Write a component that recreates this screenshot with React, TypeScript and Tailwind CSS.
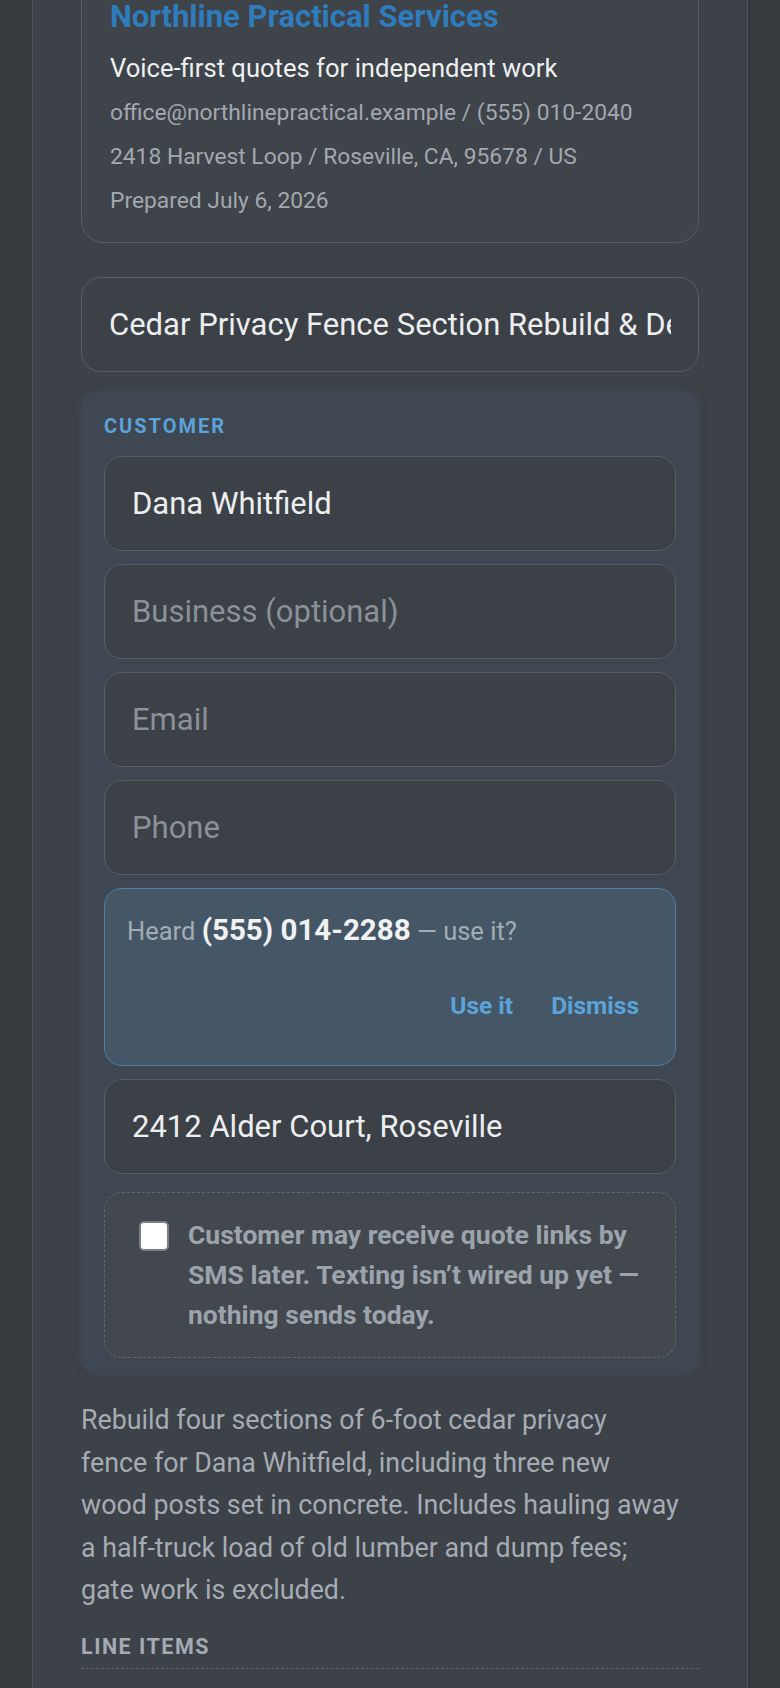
import { useState } from 'react';

const customerFields = [
  { key: 'name', value: 'Dana Whitfield', placeholder: 'Name' },
  { key: 'business', value: '', placeholder: 'Business (optional)' },
  { key: 'email', value: '', placeholder: 'Email' },
  { key: 'phone', value: '', placeholder: 'Phone' },
];

function Field({ value, placeholder }: { value: string; placeholder: string }) {
  return (
    <input
      readOnly
      defaultValue={value}
      placeholder={placeholder}
      className="block h-[95px] w-full rounded-[18px] border border-[#595e66] bg-[#3c4047] px-[27px] text-[31px] text-[#eceef0] outline-none placeholder:text-[#8b9198]"
    />
  );
}

export default function App() {
  const [heardOpen, setHeardOpen] = useState(true);
  const [smsOk, setSmsOk] = useState(false);

  return (
    <div className="min-h-screen overflow-hidden bg-[#363a3f] font-['Roboto',sans-serif]">
      <div className="mx-[32px] min-h-screen border-x border-[#50555c] bg-[#3d4148] px-[48px] pb-[40px]">
        {/* business header card, scrolled partly out of view */}
        <div className="mt-[-32px] rounded-[22px] border border-[#585d64] bg-[#3f434a] px-[28px] pb-[19px] pt-[28px]">
          <h1 className="text-[31px] font-bold leading-[40px] text-[#2f7cbd]">Northline Practical Services</h1>
          <p className="mt-[11px] text-[25.6px] leading-[40px] text-[#eef0f2]">Voice-first quotes for independent work</p>
          <p className="mt-[3px] text-[22.8px] leading-[44px] text-[#a2a8af]">office@northlinepractical.example / (555) 010-2040</p>
          <p className="text-[22.8px] leading-[44px] text-[#a2a8af]">2418 Harvest Loop / Roseville, CA, 95678 / US</p>
          <p className="text-[22.8px] leading-[44px] text-[#a2a8af]">Prepared July 6, 2026</p>
        </div>

        {/* quote title */}
        <input
          readOnly
          defaultValue="Cedar Privacy Fence Section Rebuild & Debris Haul-Away"
          className="mt-[34px] block h-[95px] w-full rounded-[20px] border border-[#595e66] bg-[#3c4047] px-[27px] text-[31px] text-[#eceef0] outline-none"
        />

        {/* customer block */}
        <section className="mt-[19px] rounded-[18px] bg-[#3f4852] px-[23px] pb-[17px] pt-[22px] shadow-[0_0_6px_2px_rgba(63,72,82,0.6)]">
          <h2 className="text-[20px] font-bold leading-[26px] tracking-[2px] text-[#5ba2d8]">CUSTOMER</h2>
          <div className="mt-[17px] flex flex-col gap-[13px]">
            {customerFields.map((f) => (
              <Field key={f.key} value={f.value} placeholder={f.placeholder} />
            ))}

            {heardOpen && (
              <div className="rounded-[18px] border border-[#4e7fa6] bg-[#455767] px-[22px] pb-[35px] pt-[21px]">
                <p className="text-[25.5px] leading-[40px] text-[#a3acb5]">
                  Heard <span className="text-[29.5px] font-bold text-[#f1f2f3]">(555) 014-2288</span> — use it?
                </p>
                <div className="mt-[31px] flex justify-end gap-[10px]">
                  <button
                    onClick={() => setHeardOpen(false)}
                    className="h-[48px] px-[14px] text-[24.5px] font-bold text-[#5ba3d9]"
                  >
                    Use it
                  </button>
                  <button
                    onClick={() => setHeardOpen(false)}
                    className="h-[48px] px-[14px] text-[24.5px] font-bold text-[#5ba3d9]"
                  >
                    Dismiss
                  </button>
                </div>
              </div>
            )}

            <Field value="2412 Alder Court, Roseville" placeholder="Address" />
          </div>

          <label className="mt-[18px] flex gap-[19px] rounded-[18px] border border-dashed border-[#62686f] bg-[#43484f] py-[22px] pl-[34px] pr-[16px]">
            <span
              onClick={() => setSmsOk(!smsOk)}
              className="mt-[6px] h-[30px] w-[30px] shrink-0 rounded-[5px] border-2 border-[#7a8088] bg-white"
            >
              {smsOk && (
                <svg viewBox="0 0 24 24" className="h-full w-full" fill="none" stroke="#2f7cbd" strokeWidth="3">
                  <path d="M5 12l5 5 9-10" />
                </svg>
              )}
            </span>
            <span className="text-[26.5px] font-bold leading-[40px] text-[#9ba3ac]">
              Customer may receive quote links by SMS later. Texting isn’t wired up yet — nothing sends today.
            </span>
          </label>
        </section>

        {/* scope summary */}
        <p className="mt-[24px] text-[26.8px] leading-[42.5px] text-[#a5acb4]">
          Rebuild four sections of 6-foot cedar privacy
          <br />
          fence for Dana Whitfield, including three new
          <br />
          wood posts set in concrete. Includes hauling away
          <br />
          a half-truck load of old lumber and dump fees;
          <br />
          gate work is excluded.
        </p>

        <h3 className="mt-[22px] border-b border-dashed border-[#5d6269] pb-[8px] text-[21.5px] font-bold leading-[26px] tracking-[1.5px] text-[#a3aab3]">
          LINE ITEMS
        </h3>
      </div>
    </div>
  );
}
